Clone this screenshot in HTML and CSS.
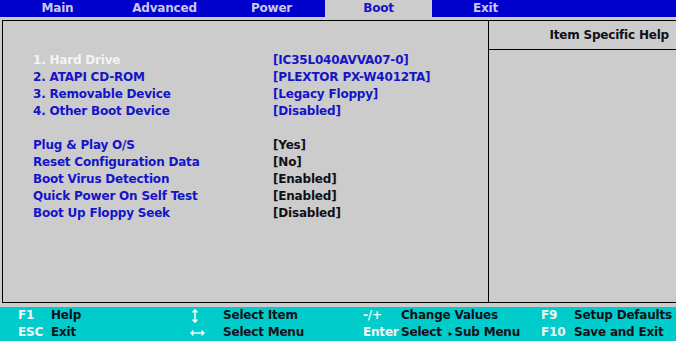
FILE: index.html
```html
<!DOCTYPE html>
<html lang="en">
<head>
    <meta charset="UTF-8">
    <title>BIOS Setup - Boot</title>
    <link rel="stylesheet" href="styles.css">
</head>
<body>
    <!-- Top menu -->
    <div class="menubar">
        <div class="tab">Main</div>
        <div class="tab">Advanced</div>
        <div class="tab">Power</div>
        <div class="tab active">Boot</div>
        <div class="tab">Exit</div>
    </div>

    <div class="screen">
        <div class="settings">
            <div class="group">
                <div class="row selected"><span class="label">1. Hard Drive</span><span class="value">[IC35L040AVVA07-0]</span></div>
                <div class="row"><span class="label">2. ATAPI CD-ROM</span><span class="value">[PLEXTOR PX-W4012TA]</span></div>
                <div class="row"><span class="label">3. Removable Device</span><span class="value">[Legacy Floppy]</span></div>
                <div class="row"><span class="label">4. Other Boot Device</span><span class="value">[Disabled]</span></div>
            </div>
            <div class="group">
                <div class="row"><span class="label">Plug &amp; Play O/S</span><span class="value plain">[Yes]</span></div>
                <div class="row"><span class="label">Reset Configuration Data</span><span class="value plain">[No]</span></div>
                <div class="row"><span class="label">Boot Virus Detection</span><span class="value plain">[Enabled]</span></div>
                <div class="row"><span class="label">Quick Power On Self Test</span><span class="value plain">[Enabled]</span></div>
                <div class="row"><span class="label">Boot Up Floppy Seek</span><span class="value plain">[Disabled]</span></div>
            </div>
        </div>
        <div class="help">
            <div class="help-title">Item Specific Help</div>
        </div>
    </div>

    <!-- Key legend -->
    <div class="legend">
        <span class="key">F1</span><span class="desc">Help</span>
        <span class="key"><svg class="arrow" width="10" height="17" viewBox="0 0 10 17"><path d="M5 3V15M2.5 5.5L5 3L7.5 5.5M2.5 12.5L5 15L7.5 12.5" fill="none" stroke="#f4f4f4" stroke-width="1.6"/></svg></span><span class="desc">Select Item</span>
        <span class="key">-/+</span><span class="desc">Change Values</span>
        <span class="key">F9</span><span class="desc">Setup Defaults</span>

        <span class="key">ESC</span><span class="desc">Exit</span>
        <span class="key"><svg class="arrow" width="16" height="17" viewBox="0 0 16 17"><path d="M1 9H14M3.5 6.5L1 9L3.5 11.5M11.5 6.5L14 9L11.5 11.5" fill="none" stroke="#f4f4f4" stroke-width="1.4"/></svg></span><span class="desc">Select Menu</span>
        <span class="key">Enter</span><span class="desc">Select <span class="tri">&#x25B8;</span>Sub Menu</span>
        <span class="key">F10</span><span class="desc">Save and Exit</span>
    </div>
</body>
</html>
```

FILE: styles.css
```css
body {
    margin: 0;
    width: 676px;
    height: 341px;
    overflow: hidden;
    background: #cccccc;
    font-family: "DejaVu Sans", Verdana, sans-serif;
    font-weight: bold;
    font-size: 12px;
    line-height: 17px;
    letter-spacing: -0.2px;
}

.menubar {
    display: flex;
    height: 17px;
    padding-left: 4px;
    background: #0000cc;
    line-height: 17px;
}

.tab {
    width: 107px;
    text-align: center;
    color: #c8c8ee;
}

.tab.active {
    background: #cccccc;
    color: #1414c8;
}

.screen {
    display: flex;
    height: 281px;
    margin: 3px 0 0 2px;
    border: 1px solid #000;
    border-right: none;
}

.settings {
    width: 486px;
    padding: 31px 0 0 30px;
    box-sizing: border-box;
    border-right: 1px solid #000;
}

.group {
    margin-bottom: 17px;
}

.row {
    display: flex;
    height: 17px;
}

.label {
    width: 240px;
    color: #1414c8;
}

.value {
    color: #1414c8;
}

.value.plain {
    color: #101018;
}

.row.selected .label {
    color: #f4f4f4;
}

.help {
    flex: 1;
}

.help-title {
    height: 22px;
    padding: 6px 7px 0 0;
    text-align: right;
    color: #101018;
    border-bottom: 1px solid #000;
}

.legend {
    display: grid;
    grid-template-columns: 33px 139px 33px 140px 38px 140px 33px auto;
    margin-top: 4px;
    padding-left: 18px;
    height: 34px;
    background: #00cccc;
}

.key {
    color: #f4f4f4;
}

.arrow {
    display: block;
}

.desc {
    color: #101018;
}

.tri {
    font-size: 8px;
    padding: 0 2px 0 3px;
}
```
